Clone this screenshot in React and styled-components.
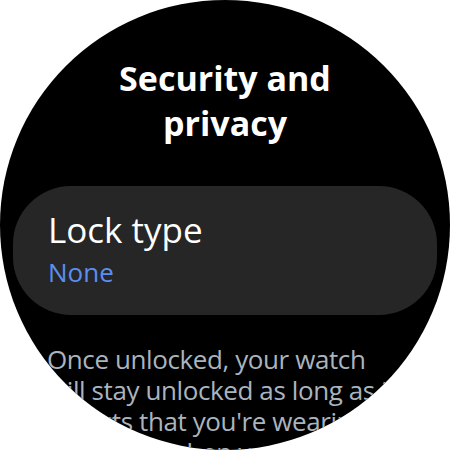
import React from 'react';
import styled, { createGlobalStyle } from 'styled-components';

const GlobalStyle = createGlobalStyle`
  html, body {
    margin: 0;
    padding: 0;
    background: #ffffff;
  }
  * {
    box-sizing: border-box;
  }
`;

const Watch = styled.div`
  width: 450px;
  height: 450px;
  border-radius: 50%;
  overflow: hidden;
  background: #000000;
  display: flex;
  flex-direction: column;
  align-items: flex-start;
  padding: 56px 13px 0;
  font-family: "Open Sans", "Noto Sans", sans-serif;

  & > * {
    flex-shrink: 0;
  }
`;

const Title = styled.h1`
  align-self: stretch;
  margin: 0 0 40px;
  text-align: center;
  color: #ffffff;
  font-size: 34px;
  font-weight: 700;
  line-height: 45px;
`;

const Card = styled.div`
  align-self: stretch;
  background: #262626;
  border-radius: 58px;
  height: 129px;
  padding: 22px 35px 0;
  display: flex;
  flex-direction: column;
`;

const CardLabel = styled.div`
  color: #ffffff;
  font-size: 35px;
  line-height: 44px;
`;

const CardValue = styled.div`
  color: ${({ tone }) => tone || '#5a8ff0'};
  font-size: 26px;
  line-height: 40px;
`;

const Description = styled.p`
  margin: 29px 0 0 34px;
  width: 352px;
  color: #aab4be;
  font-size: 26px;
  letter-spacing: -0.4px;
  line-height: 31px;
`;

export default function App() {
  return (
    <>
      <GlobalStyle />
      <Watch>
        <Title>
          Security and
          <br />
          privacy
        </Title>
        <Card>
          <CardLabel>Lock type</CardLabel>
          <CardValue>None</CardValue>
        </Card>
        <Description>
          Once unlocked, your watch will stay unlocked as long as it detects
          that you're wearing it. It will lock when you take it off.
        </Description>
      </Watch>
    </>
  );
}
